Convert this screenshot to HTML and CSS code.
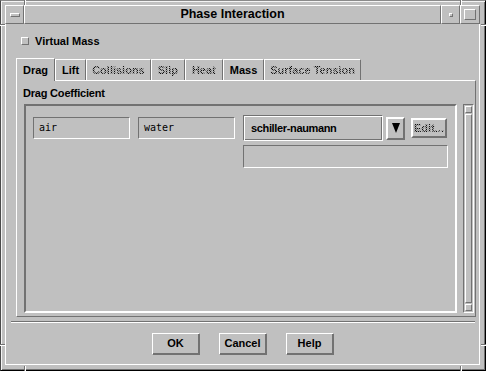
FILE: index.html
```html
<!DOCTYPE html>
<html>
<head>
<meta charset="utf-8">
<title>Phase Interaction</title>
<link rel="stylesheet" href="styles.css">
</head>
<body>
<div class="frame">
  <span class="mark mark-v mark-tl-v"></span>
  <span class="mark mark-h mark-tl-h"></span>
  <span class="mark mark-v mark-tr-v"></span>
  <span class="mark mark-h mark-tr-h"></span>
  <span class="mark mark-v mark-bl-v"></span>
  <span class="mark mark-h mark-bl-h"></span>
  <span class="mark mark-v mark-br-v"></span>
  <span class="mark mark-h mark-br-h"></span>

  <div class="titlebar">
    <div class="tb-btn tb-menu"><span class="menu-bar"></span></div>
    <div class="title">Phase Interaction</div>
    <div class="tb-btn tb-min"><span class="min-dot"></span></div>
    <div class="tb-btn tb-max"><span class="max-box"></span></div>
  </div>

  <div class="client">
    <div class="check-row">
      <span class="check-box"></span>
      <span class="check-label">Virtual Mass</span>
    </div>

    <div class="tabs">
      <div class="tab active">Drag</div>
      <div class="tab">Lift</div>
      <div class="tab tab-tight"><span class="stipple">Collisions</span></div>
      <div class="tab"><span class="stipple">Slip</span></div>
      <div class="tab"><span class="stipple">Heat</span></div>
      <div class="tab">Mass</div>
      <div class="tab tab-tight"><span class="stipple">Surface Tension</span></div>
    </div>

    <div class="panel">
      <div class="panel-label">Drag Coefficient</div>
      <div class="panel-body">
        <div class="group">
          <div class="row">
            <div class="field field-air">air</div>
            <div class="field field-water">water</div>
            <div class="combo">schiller-naumann</div>
            <div class="arrow-btn">
              <svg width="8" height="10" viewBox="0 0 8 10"><polygon points="0,0 8,0 4,10" fill="#000"/></svg>
            </div>
            <div class="edit-btn"><span class="stipple">Edit...</span></div>
          </div>
          <div class="field field-wide"></div>
        </div>
        <div class="scrollbar">
          <div class="sb-arrow sb-up"></div>
          <div class="sb-thumb"></div>
          <div class="sb-arrow sb-down"></div>
        </div>
      </div>
    </div>

    <div class="separator"></div>

    <div class="buttons">
      <div class="btn">OK</div>
      <div class="btn">Cancel</div>
      <div class="btn">Help</div>
    </div>
  </div>
</div>
</body>
</html>
```

FILE: styles.css
```css
* { box-sizing: border-box; }

html, body {
  margin: 0;
  padding: 0;
  background: #c0c0c0;
}

body {
  font-family: "Liberation Sans", Arial, Helvetica, sans-serif;
  font-size: 11px;
  font-weight: bold;
  color: #000;
}

.frame {
  position: relative;
  width: 486px;
  height: 371px;
  background: #c0c0c0;
  border: 1px solid;
  border-color: #8a8a8a #000 #000 #4a4a4a;
  box-shadow: inset 1px 1px 0 #f4f4f4, inset -1px -1px 0 #727272;
  padding: 4px 5px 5px 4px;
  display: flex;
  flex-direction: column;
}

/* resize-corner marks on the window frame */
.mark { position: absolute; display: block; }
.mark-v { width: 2px; height: 5px; border-left: 1px solid #727272; border-right: 1px solid #fff; }
.mark-h { width: 5px; height: 2px; border-top: 1px solid #727272; border-bottom: 1px solid #fff; }
.mark-tl-v { left: 23px; top: -1px; }
.mark-tl-h { left: -1px; top: 23px; }
.mark-tr-v { left: 459px; top: -1px; }
.mark-tr-h { right: -1px; top: 23px; }
.mark-bl-v { left: 23px; bottom: -1px; }
.mark-bl-h { left: -1px; top: 343px; }
.mark-br-v { left: 459px; bottom: -1px; }
.mark-br-h { right: -1px; top: 343px; }

/* title bar */
.titlebar {
  display: flex;
  height: 19px;
  flex: none;
}

.tb-btn,
.title {
  border: 1px solid;
  border-color: #fff #727272 #727272 #fff;
}

.tb-menu { width: 19px; display: flex; align-items: center; justify-content: center; }
.tb-min { width: 19px; display: flex; align-items: center; justify-content: center; }
.tb-max { width: 20px; display: flex; align-items: center; justify-content: center; }

.menu-bar {
  width: 10px;
  height: 4px;
  border: 1px solid;
  border-color: #fff #727272 #727272 #fff;
}

.min-dot {
  width: 4px;
  height: 4px;
  border: 1px solid;
  border-color: #fff #727272 #727272 #fff;
}

.max-box {
  width: 12px;
  height: 11px;
  border: 1px solid;
  border-color: #fff #727272 #727272 #fff;
}

.title {
  flex: 1;
  text-align: center;
  font-size: 12.5px;
  line-height: 17px;
}

/* client area */
.client {
  flex: 1;
  display: flex;
  flex-direction: column;
  border: 1px solid;
  border-top: none;
  border-color: transparent #fff #fff #fff;
  padding: 1px 3px 0 10px;
}

.check-row {
  display: flex;
  align-items: center;
  height: 16px;
  margin-top: 8px;
  padding-left: 5px;
}

.check-box {
  width: 8px;
  height: 8px;
  border: 1px solid;
  border-color: #fff #727272 #727272 #fff;
  margin-right: 6px;
}

.check-label { line-height: 16px; }

/* tabs */
.tabs {
  display: flex;
  align-items: flex-end;
  height: 23px;
  margin-top: 8px;
}

.tab {
  height: 21px;
  padding: 0 6px;
  line-height: 20px;
  border: 1px solid;
  border-bottom: none;
  border-color: #fff #727272 transparent #fff;
  white-space: nowrap;
}

.tab-tight { padding: 0 5px; }

.tab.active {
  height: 23px;
  line-height: 22px;
  position: relative;
  top: 1px;
  background: #c0c0c0;
  z-index: 1;
}

.stipple {
  color: transparent;
  background-image: repeating-conic-gradient(#111 0 25%, #a4a4a4 0 50%);
  background-size: 2px 2px;
  -webkit-background-clip: text;
  background-clip: text;
}

/* panel */
.panel {
  height: 237px;
  flex: none;
  border: 1px solid;
  border-color: #fff #727272 #727272 #fff;
  display: flex;
  flex-direction: column;
}

.panel-label {
  line-height: 14px;
  height: 14px;
  padding-left: 6px;
  margin-top: 5px;
  margin-bottom: 4px;
  letter-spacing: -0.2px;
}

.panel-body {
  display: flex;
  padding-left: 7px;
  gap: 6px;
}

.group {
  width: 433px;
  height: 209px;
  border: 2px solid;
  border-color: #727272 #fff #fff #727272;
  padding: 9px 0 0 7px;
}

.row {
  display: flex;
  align-items: center;
  height: 26px;
}

.field {
  height: 22px;
  border: 1px solid;
  border-color: #727272 #fff #fff #727272;
  font-family: "DejaVu Sans Mono", "Liberation Mono", monospace;
  font-weight: normal;
  font-size: 10px;
  line-height: 20px;
  padding-left: 5px;
}

.field-air { width: 97px; margin-right: 8px; }
.field-water { width: 97px; margin-right: 8px; }
.field-wide { width: 205px; height: 23px; margin: 4px 0 0 210px; }

.combo {
  width: 140px;
  height: 26px;
  border: 1px solid;
  border-color: #727272 #fff #fff #727272;
  box-shadow: inset 1px 1px 0 #fff, inset -1px -1px 0 #727272;
  line-height: 24px;
  padding-left: 7px;
  margin-right: 3px;
  letter-spacing: -0.35px;
}

.arrow-btn {
  width: 19px;
  height: 23px;
  border: 2px solid;
  border-color: #fff #727272 #727272 #fff;
  display: flex;
  align-items: center;
  justify-content: center;
  margin-right: 6px;
}

.arrow-btn svg { display: block; }

.edit-btn {
  width: 36px;
  height: 20px;
  border: 2px solid;
  border-color: #fff #727272 #727272 #fff;
  line-height: 16px;
  text-align: center;
}

/* scrollbar */
.scrollbar {
  width: 11px;
  height: 209px;
  border: 1px solid;
  border-color: #727272 #fff #fff #727272;
  display: flex;
  flex-direction: column;
  padding: 1px;
}

.sb-arrow {
  height: 7px;
  flex: none;
  border: 1px solid;
  border-color: #fff #727272 #727272 #fff;
}

.sb-thumb {
  flex: 1;
  border: 1px solid;
  border-color: #fff #727272 #727272 #fff;
  margin: 1px 0;
}

/* separator & buttons */
.separator {
  height: 2px;
  margin: 4px 1px 0 -5px;
  border-top: 1px solid #727272;
  border-bottom: 1px solid #fff;
  flex: none;
}

.buttons {
  display: flex;
  justify-content: center;
  gap: 19px;
  margin-top: 10px;
  margin-left: -7px;
}

.btn {
  width: 48px;
  height: 22px;
  border: 1px solid;
  border-color: #fff #727272 #727272 #fff;
  box-shadow: inset -1px -1px 0 #727272;
  text-align: center;
  line-height: 19px;
}
```
